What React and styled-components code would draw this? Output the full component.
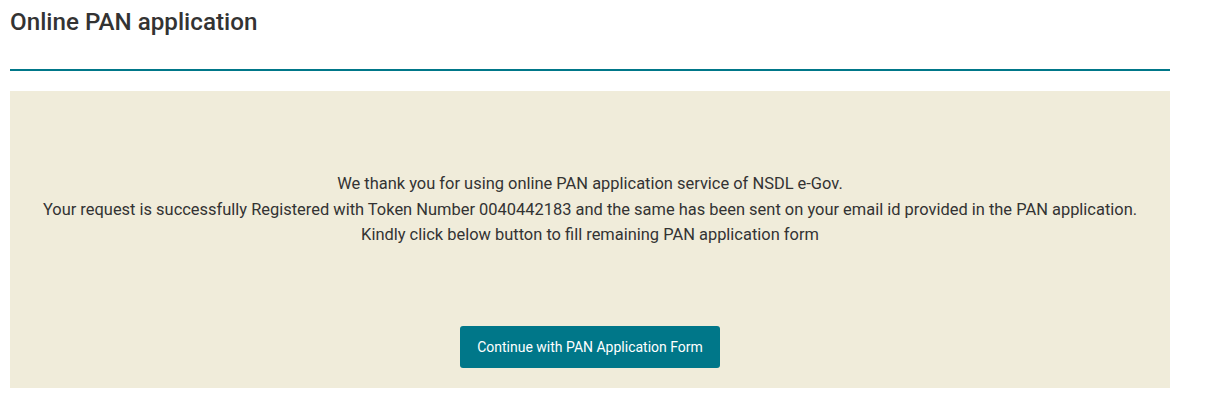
import React from "react";
import styled, { createGlobalStyle } from "styled-components";

const Global = createGlobalStyle`
  html, body { margin: 0; padding: 0; background: #fff; }
  body { font-family: Roboto, "Noto Sans", sans-serif; color: #333; }
`;

const Page = styled.div`
  width: 1160px;
  padding: 0 10px;
`;

const Title = styled.h1`
  margin: 0;
  padding-top: 7px;
  font-size: 24.2px;
  font-weight: 500;
  line-height: 30px;
  color: #333;
  height: 62px;
  border-bottom: 2px solid #007789;
  box-sizing: content-box;
`;

const Panel = styled.div`
  margin-top: 20px;
  background: #f0ecda;
  height: 297px;
  box-sizing: border-box;
  padding-top: 80px;
  display: flex;
  flex-direction: column;
  align-items: center;
`;

const Message = styled.p`
  margin: 0;
  font-size: 16.45px;
  line-height: 25.5px;
  text-align: center;
  color: #333;
`;

const Button = styled.button`
  margin-top: 78px;
  height: 42px;
  padding: 0 17px;
  background: #007789;
  color: #fff;
  border: none;
  border-radius: 3px;
  font-family: Roboto, sans-serif;
  font-size: 14px;
  cursor: pointer;
`;

export default function App() {
  return (
    <>
      <Global />
      <Page>
        <Title>Online PAN application</Title>
        <Panel>
          <Message>
            We thank you for using online PAN application service of NSDL e-Gov.
            <br />
            Your request is successfully Registered with Token Number 0040442183 and the same has been sent on your email id provided in the PAN application.
            <br />
            Kindly click below button to fill remaining PAN application form
          </Message>
          <Button>Continue with PAN Application Form</Button>
        </Panel>
      </Page>
    </>
  );
}
